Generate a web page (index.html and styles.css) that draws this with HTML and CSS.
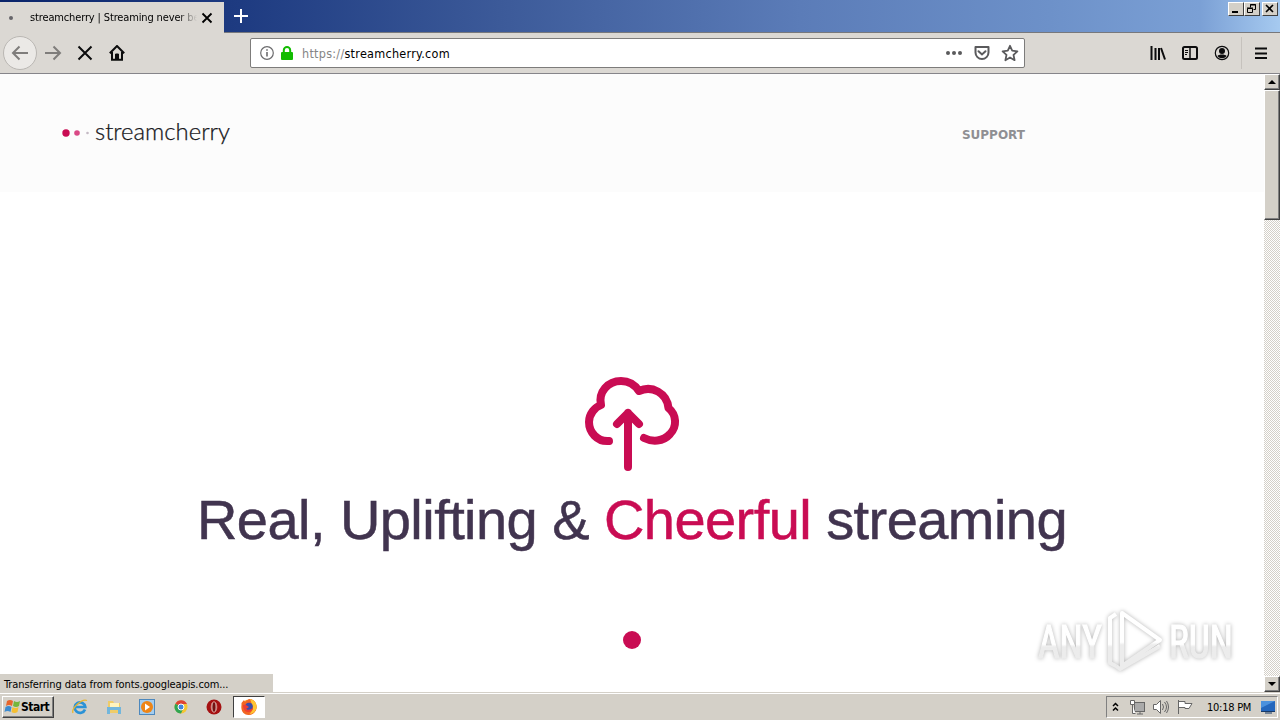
FILE: index.html
```html
<!DOCTYPE html>
<html lang="en">

<head>
    <meta charset="UTF-8">
    <meta name="viewport" content="width=device-width, initial-scale=1.0">
    <title>streamcherry | Streaming never better</title>
    <link rel="stylesheet" href="styles.css">
</head>

<body>

    <!-- Title bar with tabs -->
    <div class="titlebar">
        <div class="tab">
            <span class="tab-dot"></span>
            <span class="tab-title"><span class="tab-text">streamcherry | Streaming never be</span></span>
            <svg class="tab-close" width="12" height="12" viewBox="0 0 12 12"><path d="M1.5 1.5l9 9M10.5 1.5l-9 9" /></svg>
        </div>
        <svg class="new-tab" width="14" height="14" viewBox="0 0 14 14"><path d="M7 0v14M0 7h14" /></svg>
        <div class="window-buttons">
            <span class="win-btn"><svg width="14" height="12"><path d="M3 9h6" stroke-width="2" /></svg></span>
            <span class="win-btn"><svg width="14" height="12"><path d="M5.500 4.500v-3h5v5h-2M5 2h6M2.500 5.500h5v4h-5zM2 5h6" /></svg></span>
            <span class="win-btn win-close"><svg width="14" height="12"><path d="M3 2l7 7M10 2l-7 7" stroke-width="1.600" /></svg></span>
        </div>
    </div>

    <!-- Navigation toolbar -->
    <div class="toolbar">
        <span class="back"><svg class="grey" width="18" height="18" viewBox="0 0 18 18"><path d="M17 9H2M8.500 2.500L2 9l6.500 6.500" /></svg></span>
        <span class="tool"><svg class="grey" width="18" height="18" viewBox="0 0 18 18"><path d="M1 9h15M9.500 2.500L16 9l-6.500 6.500" /></svg></span>
        <span class="tool"><svg width="16" height="16" viewBox="0 0 16 16"><path d="M1.500 1.500l13 13M14.500 1.500l-13 13" /></svg></span>
        <span class="tool"><svg width="16" height="16" viewBox="0 0 16 16"><path d="M.8 8.200L8 1l7.200 7.200M3 7v7.800h10V7" /><path d="M6.500 14V9h3v5z" fill="#0c0c0d" stroke-width="1" /></svg></span>

        <div class="urlbar">
            <svg class="info" width="14" height="14" viewBox="0 0 14 14"><circle cx="7" cy="7" r="6.300" /><path d="M7 6v4.500M7 3.300v1.500" stroke-width="1.600" /></svg>
            <svg class="lock" width="12" height="14" viewBox="0 0 12 14"><path d="M2.800 7V4.200a3.200 3.200 0 0 1 6.400 0V7" fill="none" stroke="#12bc00" stroke-width="2" /><rect y="6" width="12" height="8" rx="1" fill="#12bc00" /></svg>
            <span class="url"><span class="scheme">https://</span>streamcherry.com</span>
            <svg class="page-actions" width="76" height="18" viewBox="0 0 76 18">
                <g fill="#5a5a5c" stroke="none"><circle cx="5" cy="9" r="2" /><circle cx="11" cy="9" r="2" /><circle cx="17" cy="9" r="2" /></g>
                <path d="M32.500 3h13v5.500a6.500 6.500 0 0 1-13 0z" stroke-width="2" stroke-linejoin="round" />
                <path d="M35.500 7.200l3.500 3.300 3.500-3.300" stroke-width="2" stroke-linecap="round" />
                <path d="M67 1.800l2.200 4.900 5.200.6-3.900 3.600 1.100 5.300-4.600-2.700-4.600 2.700 1.100-5.300-3.900-3.600 5.200-.6z" stroke-width="1.800" stroke-linejoin="round" />
            </svg>
        </div>

        <span class="tool"><svg width="16" height="16" viewBox="0 0 16 16"><path d="M1.500 1v14M5.500 3v12M9 3v12M11 3l4 11.500" /></svg></span>
        <span class="tool"><svg width="16" height="16" viewBox="0 0 16 16"><rect x="1" y="2" width="14" height="12" rx="1.500" /><path d="M8 2v12" stroke-width="1.500" /><path d="M3 5.500h3M3 7.500h3M3 9.500h2" stroke-width="1" /></svg></span>
        <span class="tool"><svg width="16" height="16" viewBox="0 0 16 16"><circle cx="8" cy="8" r="6.700" stroke-width="1.200" /><circle cx="8" cy="6" r="3" fill="#0c0c0d" stroke="none" /><path d="M3.500 11c1-2 8-2 9 0-2 3-7 3-9 0z" fill="#0c0c0d" stroke="none" /></svg></span>
        <span class="separator"></span>
        <span class="tool"><svg width="16" height="16" viewBox="0 0 16 16"><path d="M2 3.500h12M2 8.500h12M2 13h12" /></svg></span>
    </div>

    <!-- Page content and scrollbar -->
    <div class="viewport">
        <div class="page">
            <header class="site-header">
                <svg class="logo" width="180" height="36" viewBox="0 0 180 36">
                    <circle cx="6" cy="17" r="3.700" fill="#c90c53" />
                    <circle cx="17" cy="17" r="2.800" fill="#da4a86" />
                    <circle cx="27.500" cy="17" r="1.300" fill="#c4b9c4" />
                    <text x="35" y="23.500" textLength="135" lengthAdjust="spacingAndGlyphs">streamcherry</text>
                </svg>
                <a class="nav-link">SUPPORT</a>
            </header>

            <div class="hero">
                <svg class="cloud" width="96" height="96" viewBox="0 0 96 96">
                    <path d="M25 65C13 66 5 56 5 46c0-8 6-15 12-17C14 16 24 5 37 5c8 0 14 4 18 10C68 9 83 17 84.500 32C93 39 93 51 86 58c-7 8-18 8-26 4" />
                    <path d="M44 91V37M33 48l11-11 11 11" />
                </svg>
                <h1>Real, Uplifting &amp; <span>Cheerful</span> streaming</h1>
                <div class="loader"></div>
            </div>

            <div class="status">Transferring data from fonts.googleapis.com...</div>

            <svg class="watermark" width="230" height="84" viewBox="0 0 230 84">
                <defs>
                    <linearGradient id="fade" x1="0" y1="0" x2="0" y2="1">
                        <stop offset="0.55" stop-color="#ffffff" />
                        <stop offset="0.6" stop-color="#ececec" />
                    </linearGradient>
                </defs>
                <g class="mark">
                    <text x="8" y="54" textLength="64" lengthAdjust="spacingAndGlyphs">ANY</text>
                    <text x="139" y="54" textLength="64" lengthAdjust="spacingAndGlyphs">RUN</text>
                    <path d="M92 9l38 27-38 26z" />
                    <path d="M86 10l-6 4v45l6 3M86 62l4 3 40-23" />
                </g>
            </svg>
        </div>
        <div class="scrollbar">
            <div class="scroll-btn"><svg width="8" height="4"><path d="M4 0l4 4H0z" /></svg></div>
            <div class="scroll-thumb"></div>
            <div class="scroll-btn scroll-down"><svg width="8" height="4"><path d="M0 0h8L4 4z" /></svg></div>
        </div>
    </div>

    <!-- Taskbar -->
    <div class="taskbar">
        <div class="start">
            <svg width="17" height="16" viewBox="0 0 17 16">
                <path d="M3 2q3-2 6 0L8 7Q5 5 2 7z" fill="#e8662c" /><path d="M10 2q3 2 6 0l-1 5q-3 2-6 0z" fill="#75b63b" />
                <path d="M1.500 8q3-2 6 0l-1 5q-3-2-6 0z" fill="#3c8bd0" /><path d="M8.500 8q3 2 6 0l-1 5q-3 2-6 0z" fill="#f5bf32" />
            </svg>
            <span>Start</span>
        </div>
        <div class="quick-launch">
            <svg width="16" height="16" viewBox="0 0 16 16"><path d="M13 10.500A5.300 5.300 0 1 1 13.300 8H4" fill="none" stroke="#2b92d6" stroke-width="2.700" /><path d="M1 14C-1 10 10-1 15 1.500" fill="none" stroke="#e9b62e" stroke-width="1.300" /></svg>
            <svg width="16" height="16" viewBox="0 0 16 16"><path d="M2 2h5l1 2h6v10H2z" fill="#efcc68" /><path d="M4 4h9v5H4z" fill="#fff4bd" /><path d="M1 8h14v7h-3v-4H4v4H1z" fill="#72b6dc" /></svg>
            <svg width="16" height="16" viewBox="0 0 16 16"><rect x=".5" y=".5" width="15" height="15" fill="#a4cdef" stroke="#4d88bd" /><circle cx="8" cy="8" r="6" fill="#ee8517" /><path d="M6 4.500l5 3.500-5 3.500z" fill="#fff" /></svg>
            <svg width="16" height="16" viewBox="0 0 16 16"><circle cx="8" cy="8" r="6.500" fill="#f5c633" /><path d="M8 8L2.400 4.700A6.500 6.500 0 0 1 14 5H8z" fill="#df4334" /><path d="M2.400 4.700A6.500 6.500 0 0 0 8 14.500L10 10 8 8z" fill="#31a552" /><circle cx="8" cy="8" r="3" fill="#4285dd" stroke="#fff" /></svg>
            <svg width="16" height="16" viewBox="0 0 16 16"><circle cx="8" cy="8" r="7.500" fill="#a51112" /><ellipse cx="8" cy="8" rx="2.800" ry="5.300" fill="#d6d0c9" stroke="#d9807b" /><ellipse cx="8" cy="8" rx="1.600" ry="4.800" fill="#711" /></svg>
        </div>
        <div class="task-active">
            <svg width="18" height="18" viewBox="0 0 18 18"><circle cx="9" cy="9" r="7.500" fill="#ff9a22" /><path d="M1.500 5L4 2l1 2 4-3c5 0 8 4 7.500 9-.5 4-4 7-8 7s-7-3-7-7z" fill="#f26522" /><path d="M10 1c5 1 7 5 6.500 9-1 4-4 6-7 6 3-3 4-5 3-8z" fill="#ffc533" /><circle cx="9" cy="8.500" r="3.800" fill="#3b4cab" /><path d="M3 7c3-1 4 1 6 2l-3 2c3 2 6 0 7-2 0 4-3 5-5 5-3 0-5-3-5-7z" fill="#ee3e32" /></svg>
        </div>
        <div class="tray">
            <svg class="chevrons" width="7" height="10" viewBox="0 0 7 10"><path d="M1 4l2.500-2.500L6 4M1 8.500L3.500 6 6 8.500" /></svg>
            <svg class="tray-icon" width="16" height="16" viewBox="0 0 16 16"><rect x="5.500" y="3.500" width="10" height="9" fill="#aaa" /><path d="M8 15h6M11 13v2" /><path d="M1.500 1.500h4v4h-4zM3.500 5.500v9h3" fill="#fff" /></svg>
            <svg class="tray-icon" width="16" height="16" viewBox="0 0 16 16"><path d="M.5 5.500h3l4-4v13l-4-4h-3z" fill="#fff" /><path d="M9.500 5q2 3 0 6M11.500 3q4 5 0 10M13.500 2q4 6 0 12" fill="none" /></svg>
            <svg class="tray-icon" width="16" height="16" viewBox="0 0 16 16"><path d="M1.500 1v14M2 2.500h6v2h7l-3 5H8v-1H2" fill="#fff" /></svg>
            <span class="clock">10:18 PM</span>
            <svg class="desktop" width="16" height="14" viewBox="0 0 16 14"><path d="M1 1h14v10H1z" fill="#2467bd" /><path d="M1 1h14L1 8z" fill="#4b91dd" /><path d="M1 11.500h14M5 13h7" stroke="#173966" /></svg>
        </div>
    </div>

</body>

</html>
```

FILE: styles.css
```css
:root {
    --chrome: #dbd8d3;
    --face: #d4d0c8;
    --cherry: #c90c53;
    --ink: #41344f;
}

* {
    box-sizing: border-box;
}

body {
    margin: 0;
    width: 1280px;
    height: 720px;
    overflow: hidden;
    display: flex;
    flex-direction: column;
    background: #fff;
    font-family: "DejaVu Sans Condensed", "DejaVu Sans", sans-serif;
    font-stretch: condensed;
    font-size: 11px;
    color: #000;
}

svg {
    display: block;
    flex: none;
}

/* Title bar */
.titlebar {
    height: 33px;
    display: flex;
    align-items: flex-start;
    background: linear-gradient(to right, #0a246a 0, #1e3b81 240px, #3c5a99 500px, #5b7cb8 800px, #6d91c9 1050px, #7ba0d5 1200px, #a6caf0 1280px);
    border-bottom: 1px solid #77787c;
}

.tab {
    width: 224px;
    height: 31px;
    margin-top: 2px;
    display: flex;
    align-items: center;
    padding-left: 9px;
    background: var(--chrome);
    margin-bottom: -1px;
}

.tab-dot {
    width: 4px;
    height: 4px;
    border-radius: 50%;
    background: #66656a;
}

.tab-title {
    width: 167px;
    margin-left: 17px;
    overflow: hidden;
    white-space: nowrap;
    -webkit-mask-image: linear-gradient(to right, #000 148px, transparent 167px);
    mask-image: linear-gradient(to right, #000 148px, transparent 167px);
}

.tab-text {
    letter-spacing: -0.14px;
}

.tab-close {
    margin-left: 4px;
    stroke: #000;
    stroke-width: 1.8;
}

.new-tab {
    margin: 9px 0 0 10px;
    stroke: #fff;
    stroke-width: 2;
}

.window-buttons {
    display: flex;
    margin: 2px 2px 0 auto;
}

.win-btn {
    width: 16px;
    height: 14px;
    background: var(--face);
    border: 1px solid;
    border-color: #fff #404040 #404040 #fff;
}

.win-close {
    margin-left: 2px;
}

.win-btn svg {
    fill: none;
    stroke: #000;
}

/* Toolbar */
.toolbar {
    height: 41px;
    display: flex;
    align-items: center;
    padding-left: 3px;
    background: var(--chrome);
    border-bottom: 1px solid #86858a;
}

.back {
    width: 34px;
    height: 34px;
    display: flex;
    align-items: center;
    justify-content: center;
    border: 1px solid #bab7b3;
    border-radius: 50%;
    background: #ebe9e6;
}

.tool {
    width: 32px;
    display: flex;
    justify-content: center;
}

.back svg,
.tool svg {
    fill: none;
    stroke: #0c0c0d;
    stroke-width: 2;
}

.back svg.grey,
.tool svg.grey {
    stroke: #7f7d7b;
}

.urlbar {
    width: 775px;
    height: 30px;
    margin: 0 117px;
    padding: 0 5px 0 9px;
    display: flex;
    align-items: center;
    background: #fff;
    border: 1px solid #7d7c7b;
    border-radius: 2px;
}

.info {
    fill: none;
    stroke: #6c6c6e;
    stroke-width: 1.2;
}

.lock {
    margin-left: 7px;
}

.url {
    margin-left: 9px;
    padding-top: 1px;
    font-size: 12.5px;
    letter-spacing: 0.27px;
}

.scheme {
    color: #858585;
}

.page-actions {
    margin-left: auto;
    fill: none;
    stroke: #5a5a5c;
}

.separator {
    width: 1px;
    height: 32px;
    margin: 0 3px;
    background: #c6c2bd;
}

/* Page */
.viewport {
    height: 618px;
    display: flex;
}

.page {
    position: relative;
    width: 1264px;
}

.site-header {
    height: 118px;
    display: flex;
    align-items: center;
    justify-content: space-between;
    padding: 2px 239px 0 60px;
    background: #fcfcfc;
}

.logo text {
    font-family: Lato, sans-serif;
    font-size: 22.5px;
    font-weight: 300;
    fill: #17171b;
    stroke: #17171b;
    stroke-width: 0.25;
}

.nav-link {
    padding-top: 2px;
    font-family: "DejaVu Sans", sans-serif;
    font-stretch: normal;
    font-size: 12px;
    font-weight: bold;
    color: #8f8f93;
}

.hero {
    display: flex;
    flex-direction: column;
    align-items: center;
    padding-top: 184px;
}

.cloud {
    fill: none;
    stroke: var(--cherry);
    stroke-width: 8;
    stroke-linecap: round;
    stroke-linejoin: round;
}

h1 {
    margin: 16px 0 0;
    font-family: "Liberation Sans", Arial, sans-serif;
    font-stretch: normal;
    font-size: 56px;
    font-weight: normal;
    line-height: 64px;
    letter-spacing: -0.56px;
    white-space: nowrap;
    color: var(--ink);
    -webkit-text-stroke: 0.5px;
}

h1 span {
    color: var(--cherry);
}

.loader {
    width: 18px;
    height: 18px;
    margin-top: 79px;
    border-radius: 50%;
    background: var(--cherry);
}

.status {
    position: absolute;
    left: 0;
    bottom: 0;
    width: 273px;
    height: 18px;
    padding-left: 4px;
    line-height: 21px;
    letter-spacing: -0.1px;
    background: var(--face);
    white-space: nowrap;
}

.watermark {
    position: absolute;
    left: 1030px;
    top: 530px;
    filter: drop-shadow(0 0 2px rgba(0, 0, 0, 0.3));
}

.mark text {
    font-family: Roboto, sans-serif;
    font-size: 47px;
    fill: url(#fade);
    stroke: url(#fade);
    stroke-width: 1.2;
}

.mark path {
    fill: none;
    stroke: url(#fade);
    stroke-width: 4;
    stroke-linejoin: round;
}

/* Scrollbar */
.scrollbar {
    width: 16px;
    background: repeating-conic-gradient(#fff 0 25%, #d4d0c8 0 50%) 0 0 / 2px 2px;
    display: flex;
    flex-direction: column;
}

.scroll-btn,
.scroll-thumb {
    background: var(--face);
    border: 1px solid;
    border-color: #fff #404040 #404040 #fff;
    box-shadow: inset -1px -1px #808080;
}

.scroll-btn {
    height: 16px;
    display: flex;
    align-items: center;
    justify-content: center;
}

.scroll-thumb {
    height: 130px;
}

.scroll-down {
    margin-top: auto;
}

/* Taskbar */
.taskbar {
    height: 28px;
    display: flex;
    align-items: center;
    padding: 2px 2px 2px;
    background: var(--face);
    border-top: 1px solid var(--face);
    box-shadow: inset 0 1px #fff;
}

.start {
    width: 52px;
    height: 22px;
    display: flex;
    align-items: center;
    padding-left: 1px;
    border: 1px solid;
    border-color: #fff #404040 #404040 #fff;
    box-shadow: inset -1px -1px #808080;
    font-size: 12px;
    font-weight: bold;
    letter-spacing: -0.5px;
}

.quick-launch {
    display: flex;
    gap: 17.6px;
    margin-left: 18px;
}

.task-active {
    width: 32px;
    height: 22px;
    margin-left: 11px;
    display: flex;
    align-items: center;
    justify-content: center;
    background: #fff;
    border: 1px solid;
    border-color: #404040 #fff #fff #404040;
}

.tray {
    width: 172px;
    height: 22px;
    margin-left: auto;
    display: flex;
    align-items: center;
    padding-left: 5px;
    border: 1px solid;
    border-color: #808080 #fff #fff #808080;
}

.chevrons {
    fill: none;
    stroke: #000;
    stroke-width: 1.5;
}

.tray-icon {
    margin-left: 8px;
    fill: none;
    stroke: #666;
}

.chevrons + .tray-icon {
    margin-left: 10px;
}

.clock {
    margin-left: 14px;
    padding-top: 1px;
    letter-spacing: -0.25px;
    white-space: nowrap;
}

.desktop {
    margin-left: auto;
    margin-right: 1px;
}
```
